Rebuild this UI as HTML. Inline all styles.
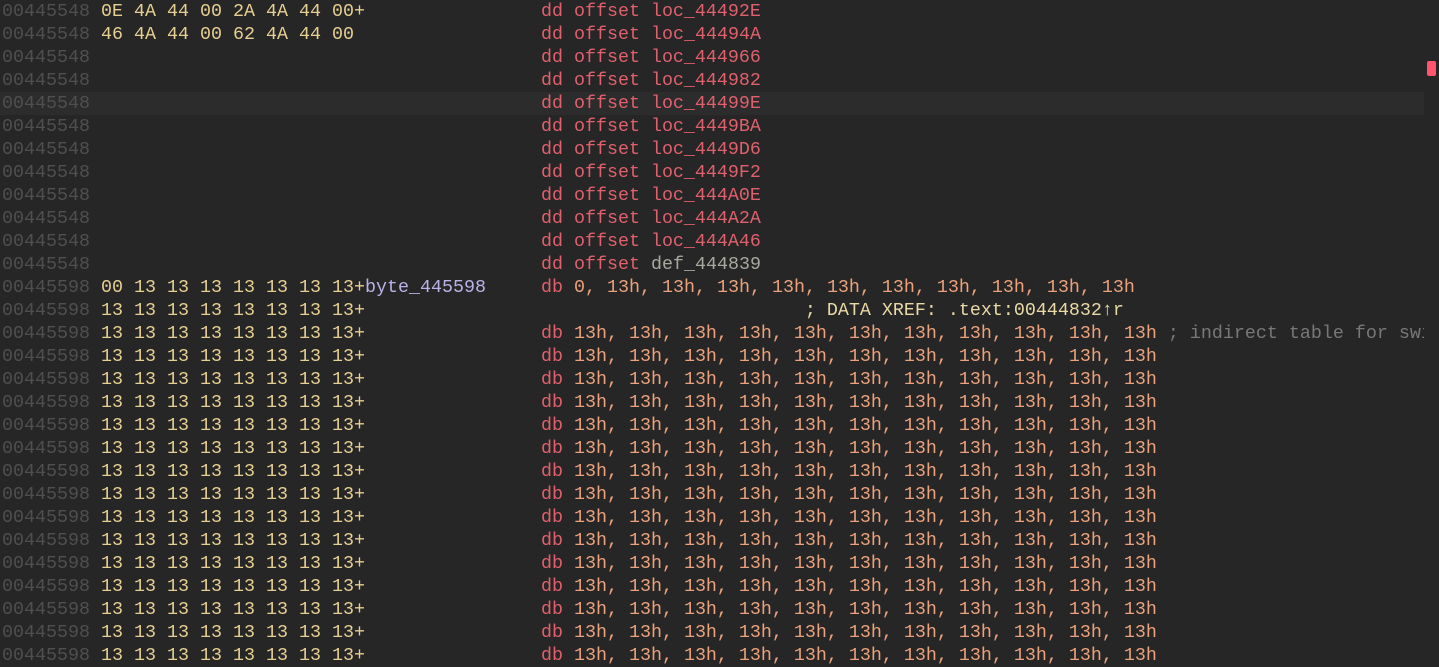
<!DOCTYPE html>
<html><head><meta charset="utf-8"><style>
html,body{margin:0;padding:0;background:#262626;width:1439px;height:654px;overflow:hidden}
.w{position:absolute;left:0;top:0px;width:1424px;overflow:hidden}
.r{height:23px;line-height:23px;white-space:pre;font-family:"Liberation Mono","DejaVu Sans Mono",monospace;font-size:18.33px;padding-left:2px;color:#e6cf92}
.hl{background:#2c2c2c}
.a{color:#4f4f4f}.h{color:#e6cf92}.k{color:#e0606d}.n{color:#eba27d}.g{color:#a8a8a0}.v{color:#b9b2e6}.c{color:#787878}.x{color:#e8d9a6}
.sb{position:absolute;left:1427px;top:61px;width:9px;height:15px;background:#ff5470;border-radius:2px}
</style></head><body>
<div class="w">
<div class="r"><span class="a">00445548</span> <span class="h">0E 4A 44 00 2A 4A 44 00+</span>                <span class="k">dd offset loc_44492E</span></div>
<div class="r"><span class="a">00445548</span> <span class="h">46 4A 44 00 62 4A 44 00</span>                 <span class="k">dd offset loc_44494A</span></div>
<div class="r"><span class="a">00445548</span>                                         <span class="k">dd offset loc_444966</span></div>
<div class="r"><span class="a">00445548</span>                                         <span class="k">dd offset loc_444982</span></div>
<div class="r hl"><span class="a">00445548</span>                                         <span class="k">dd offset loc_44499E</span></div>
<div class="r"><span class="a">00445548</span>                                         <span class="k">dd offset loc_4449BA</span></div>
<div class="r"><span class="a">00445548</span>                                         <span class="k">dd offset loc_4449D6</span></div>
<div class="r"><span class="a">00445548</span>                                         <span class="k">dd offset loc_4449F2</span></div>
<div class="r"><span class="a">00445548</span>                                         <span class="k">dd offset loc_444A0E</span></div>
<div class="r"><span class="a">00445548</span>                                         <span class="k">dd offset loc_444A2A</span></div>
<div class="r"><span class="a">00445548</span>                                         <span class="k">dd offset loc_444A46</span></div>
<div class="r"><span class="a">00445548</span>                                         <span class="k">dd offset </span><span class="g">def_444839</span></div>
<div class="r"><span class="a">00445598</span> <span class="h">00 13 13 13 13 13 13 13+</span><span class="v">byte_445598</span>     <span class="k">db</span> <span class="n">0, 13h, 13h, 13h, 13h, 13h, 13h, 13h, 13h, 13h, 13h</span></div>
<div class="r"><span class="a">00445598</span> <span class="h">13 13 13 13 13 13 13 13+</span>                                        <span class="x">; DATA XREF: .text:00444832↑r</span></div>
<div class="r"><span class="a">00445598</span> <span class="h">13 13 13 13 13 13 13 13+</span>                <span class="k">db</span> <span class="n">13h, 13h, 13h, 13h, 13h, 13h, 13h, 13h, 13h, 13h, 13h</span> <span class="c">; indirect table for switch statement</span></div>
<div class="r"><span class="a">00445598</span> <span class="h">13 13 13 13 13 13 13 13+</span>                <span class="k">db</span> <span class="n">13h, 13h, 13h, 13h, 13h, 13h, 13h, 13h, 13h, 13h, 13h</span></div>
<div class="r"><span class="a">00445598</span> <span class="h">13 13 13 13 13 13 13 13+</span>                <span class="k">db</span> <span class="n">13h, 13h, 13h, 13h, 13h, 13h, 13h, 13h, 13h, 13h, 13h</span></div>
<div class="r"><span class="a">00445598</span> <span class="h">13 13 13 13 13 13 13 13+</span>                <span class="k">db</span> <span class="n">13h, 13h, 13h, 13h, 13h, 13h, 13h, 13h, 13h, 13h, 13h</span></div>
<div class="r"><span class="a">00445598</span> <span class="h">13 13 13 13 13 13 13 13+</span>                <span class="k">db</span> <span class="n">13h, 13h, 13h, 13h, 13h, 13h, 13h, 13h, 13h, 13h, 13h</span></div>
<div class="r"><span class="a">00445598</span> <span class="h">13 13 13 13 13 13 13 13+</span>                <span class="k">db</span> <span class="n">13h, 13h, 13h, 13h, 13h, 13h, 13h, 13h, 13h, 13h, 13h</span></div>
<div class="r"><span class="a">00445598</span> <span class="h">13 13 13 13 13 13 13 13+</span>                <span class="k">db</span> <span class="n">13h, 13h, 13h, 13h, 13h, 13h, 13h, 13h, 13h, 13h, 13h</span></div>
<div class="r"><span class="a">00445598</span> <span class="h">13 13 13 13 13 13 13 13+</span>                <span class="k">db</span> <span class="n">13h, 13h, 13h, 13h, 13h, 13h, 13h, 13h, 13h, 13h, 13h</span></div>
<div class="r"><span class="a">00445598</span> <span class="h">13 13 13 13 13 13 13 13+</span>                <span class="k">db</span> <span class="n">13h, 13h, 13h, 13h, 13h, 13h, 13h, 13h, 13h, 13h, 13h</span></div>
<div class="r"><span class="a">00445598</span> <span class="h">13 13 13 13 13 13 13 13+</span>                <span class="k">db</span> <span class="n">13h, 13h, 13h, 13h, 13h, 13h, 13h, 13h, 13h, 13h, 13h</span></div>
<div class="r"><span class="a">00445598</span> <span class="h">13 13 13 13 13 13 13 13+</span>                <span class="k">db</span> <span class="n">13h, 13h, 13h, 13h, 13h, 13h, 13h, 13h, 13h, 13h, 13h</span></div>
<div class="r"><span class="a">00445598</span> <span class="h">13 13 13 13 13 13 13 13+</span>                <span class="k">db</span> <span class="n">13h, 13h, 13h, 13h, 13h, 13h, 13h, 13h, 13h, 13h, 13h</span></div>
<div class="r"><span class="a">00445598</span> <span class="h">13 13 13 13 13 13 13 13+</span>                <span class="k">db</span> <span class="n">13h, 13h, 13h, 13h, 13h, 13h, 13h, 13h, 13h, 13h, 13h</span></div>
<div class="r"><span class="a">00445598</span> <span class="h">13 13 13 13 13 13 13 13+</span>                <span class="k">db</span> <span class="n">13h, 13h, 13h, 13h, 13h, 13h, 13h, 13h, 13h, 13h, 13h</span></div>
<div class="r"><span class="a">00445598</span> <span class="h">13 13 13 13 13 13 13 13+</span>                <span class="k">db</span> <span class="n">13h, 13h, 13h, 13h, 13h, 13h, 13h, 13h, 13h, 13h, 13h</span></div>
</div>
<div class="sb"></div>
</body></html>
